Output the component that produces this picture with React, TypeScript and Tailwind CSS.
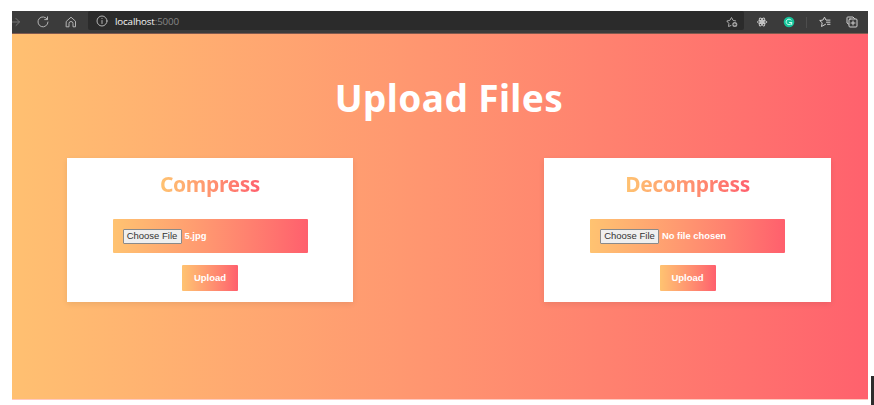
import type { ReactNode } from "react";

function Icon({ children, className }: { children: ReactNode; className: string }) {
  return (
    <svg
      viewBox="0 0 12 12"
      fill="none"
      stroke="currentColor"
      strokeWidth="1"
      strokeLinecap="round"
      strokeLinejoin="round"
      className={`h-3 w-3 shrink-0 ${className}`}
    >
      {children}
    </svg>
  );
}

function BrowserBar() {
  return (
    <header className="flex h-[22px] items-center overflow-hidden bg-[#3b3b3b] text-[#b4b4b4]">
      <Icon className="-ml-[3px] text-[#777777]">
        <path d="M1 6h9.5M7 2.5 10.5 6 7 9.500" />
      </Icon>
      <Icon className="ml-[16px]">
        <path d="M10.300 3.300A5 5 0 1 0 11 6M10.500.8v2.800H7.700" />
      </Icon>
      <Icon className="ml-[16px]">
        <path d="M1.500 5.200 6 1.200l4.500 4v5.600h-2.500V7.500a2 2 0 0 0-4 0v3.300H1.500z" />
      </Icon>
      <div className="ml-[11px] flex h-[19px] w-[656px] items-center self-start rounded-[2px] bg-[#2b2b2b]">
        <Icon className="ml-[8px] mt-px">
          <circle cx="6" cy="6" r="5" />
          <path d="M6 5.500v3M6 3.400v.1" />
        </Icon>
        <div className="ml-[7px] mt-[2px] whitespace-nowrap font-['Open_Sans',sans-serif] text-[9.8px] leading-none tracking-[-0.15px] text-[#858585]">
          <span className="text-[#f4f4f4]">localhost</span>:5000
        </div>
        <Icon className="ml-auto mr-[6px] mt-[3px] text-[#a8a8a8]">
          <path d="M5 9.500 2.500 10.500l.4-3L.8 5l3-.6L5.500 1.500l1.600 2.900 2.500.5" />
          <circle cx="8.800" cy="8.500" r="2.500" fill="currentColor" stroke="none" />
          <path d="M8.800 7.500v2M7.800 8.500h2" stroke="#2b2b2b" strokeWidth=".7" />
        </Icon>
      </div>
      <Icon className="ml-[12px] text-[#c9c9c9]">
        <g strokeWidth="1">
          <ellipse cx="6" cy="6" rx="4.600" ry="1.700" />
          <ellipse cx="6" cy="6" rx="4.300" ry="1.700" transform="rotate(60 6 6)" />
          <ellipse cx="6" cy="6" rx="4.300" ry="1.700" transform="rotate(120 6 6)" />
          <circle cx="6" cy="6" r="1" fill="currentColor" />
        </g>
      </Icon>
      <Icon className="ml-[15px]">
        <circle cx="6" cy="6" r="5.300" fill="#15c39a" stroke="none" />
        <path d="M8.200 4.200A2.800 2.800 0 1 0 8.700 6.500H6.500M8.700 6.500v2" stroke="#d0fff0" />
      </Icon>
      <div className="ml-[11px] h-[11px] w-px bg-[#4d4d4d]" />
      <Icon className="ml-[12px] text-[#d0d0d0]">
        <path d="M6.500 8.300 2.500 10.500l.7-3.700L.7 4.500l3.200-.4L5.500 1.200l1.500 2.900h4M7.500 6.200H11M8.500 8.300H11" />
      </Icon>
      <Icon className="ml-[15px] text-[#d0d0d0]">
        <path d="M2.500 8 1 7V1.800Q1 1 1.800 1H7l1.500 1.500" />
        <rect x="3" y="3" width="8" height="8" rx="1" />
        <path d="M7 5v4M5 7h4" />
      </Icon>
    </header>
  );
}

interface CardProps {
  title: string;
  fileName: string;
  widthClass: string;
}

function UploadCard({ title, fileName, widthClass }: CardProps) {
  return (
    <section
      className={`flex h-[144px] flex-col items-center bg-white shadow-[0_2px_6px_rgba(0,0,0,0.08)] ${widthClass}`}
    >
      <h2 className="mt-[11px] h-[30px] whitespace-nowrap bg-linear-to-r from-[#ffc371] to-[#ff5f6d] bg-clip-text font-['Noto_Sans',sans-serif] text-[21px] font-bold leading-[30px] tracking-[-0.35px] text-transparent">
        {title}
      </h2>
      <label className="mt-[20px] flex h-[34px] w-[195px] items-center rounded-[1px] bg-linear-to-r from-[#ffc371] to-[#ff5f6d] pl-[10px] font-['Liberation_Sans',Arial,sans-serif] text-[9.400px] leading-none">
        <span className="flex h-[15px] w-[59px] items-center justify-center whitespace-nowrap rounded-[1px] border border-[#8a8a8a] bg-[#efefef] text-[9.500px] text-[#333333]">
          Choose File
        </span>
        <span className="ml-[3px] whitespace-nowrap font-bold text-white">{fileName}</span>
      </label>
      <button className="mt-[12px] h-[26px] w-[56px] rounded-[1px] bg-linear-to-r from-[#ffc371] to-[#ff5f6d] font-['Liberation_Sans',Arial,sans-serif] text-[9.500px] font-bold leading-none text-white">
        Upload
      </button>
    </section>
  );
}

export default function App() {
  return (
    <div className="flex h-[405px] w-[874px] overflow-hidden bg-white">
      <div className="ml-[12px] mt-[11px] h-[389px] w-[856px] shrink-0">
        <BrowserBar />
        <main className="h-[367px] border-b border-b-[#ffc9c0] border-t border-t-[#80594e] bg-linear-to-r from-[#ffc071] to-[#ff616d]">
          <h1 className="pl-[18px] pt-[37px] text-center font-['Noto_Sans',sans-serif] text-[37px] font-bold leading-[54px] tracking-[0.4px] text-white">
            Upload Files
          </h1>
          <div className="mt-[33px] flex justify-between pl-[55px] pr-[37px]">
            <UploadCard title="Compress" fileName="5.jpg" widthClass="w-[286px]" />
            <UploadCard title="Decompress" fileName="No file chosen" widthClass="w-[287px]" />
          </div>
        </main>
      </div>
      <div className="ml-auto h-[29px] w-[3px] self-end bg-[#2d2d2d]" />
    </div>
  );
}
